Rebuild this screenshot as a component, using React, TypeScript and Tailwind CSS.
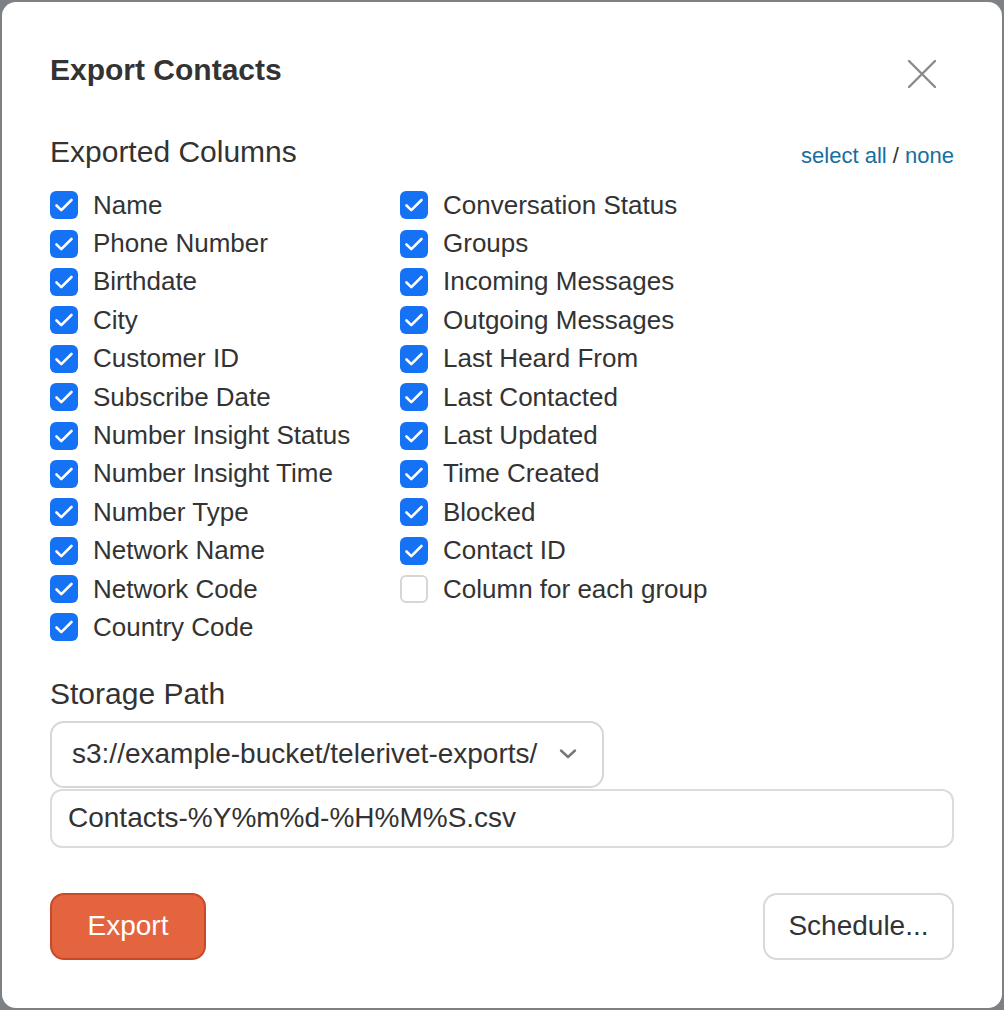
import { useState } from 'react'

const LEFT = [
  'Name',
  'Phone Number',
  'Birthdate',
  'City',
  'Customer ID',
  'Subscribe Date',
  'Number Insight Status',
  'Number Insight Time',
  'Number Type',
  'Network Name',
  'Network Code',
  'Country Code',
]

const RIGHT = [
  'Conversation Status',
  'Groups',
  'Incoming Messages',
  'Outgoing Messages',
  'Last Heard From',
  'Last Contacted',
  'Last Updated',
  'Time Created',
  'Blocked',
  'Contact ID',
  'Column for each group',
]

function Check({ label, checked, onToggle }: { label: string; checked: boolean; onToggle: () => void }) {
  return (
    <label className="flex items-center h-[38.4px] cursor-pointer" onClick={onToggle}>
      {checked ? (
        <span className="w-[28px] h-[28px] rounded-[6px] bg-[#1672f5] flex items-center justify-center flex-shrink-0">
          <svg width="28" height="28" viewBox="0 0 28 28" fill="none">
            <path d="M6.5 14.5l4.8 4.6L21.5 9" stroke="#fff" strokeWidth="2.6" strokeLinecap="round" strokeLinejoin="round" />
          </svg>
        </span>
      ) : (
        <span className="w-[28px] h-[28px] rounded-[6px] border-2 border-[#d6d6d6] bg-white flex-shrink-0" />
      )}
      <span className="ml-[15px] text-[26px] text-[#333333] whitespace-nowrap">{label}</span>
    </label>
  )
}

export default function App() {
  const [checked, setChecked] = useState<Record<string, boolean>>(() => {
    const init: Record<string, boolean> = {}
    ;[...LEFT, ...RIGHT].forEach((c) => (init[c] = c !== 'Column for each group'))
    return init
  })

  const toggle = (c: string) => setChecked((s) => ({ ...s, [c]: !s[c] }))

  return (
    <div className="w-[1004px] h-[1010px] bg-[#7d8084] p-[2px] font-['Liberation_Sans',Arial,sans-serif]">
      <div className="w-[1000px] h-[1006px] bg-white rounded-[14px] pt-[50px] px-[48px]">
        {/* header */}
        <div className="flex items-center justify-between h-[36px]">
          <h1 className="text-[30px] font-bold text-[#333333] leading-[36px]">Export Contacts</h1>
          <button className="mr-[16px] mt-[8px] text-[#8a8a8a]">
            <svg width="32" height="32" viewBox="0 0 32 32" fill="none">
              <path d="M3 3l26 26M29 3L3 29" stroke="currentColor" strokeWidth="2.4" strokeLinecap="round" />
            </svg>
          </button>
        </div>

        {/* columns */}
        <div className="flex items-end justify-between mt-[46px] h-[36px]">
          <h2 className="text-[30px] text-[#333333] leading-[36px]">Exported Columns</h2>
          <div className="text-[22px] leading-[26px] mb-[1px] text-[#333333]">
            <a className="text-[#156fa0]">select all</a> / <a className="text-[#156fa0]">none</a>
          </div>
        </div>

        <div className="grid grid-cols-[350px_1fr] mt-[16px]">
          <div className="flex flex-col">
            {LEFT.map((c) => (
              <Check key={c} label={c} checked={checked[c]} onToggle={() => toggle(c)} />
            ))}
          </div>
          <div className="flex flex-col">
            {RIGHT.map((c) => (
              <Check key={c} label={c} checked={checked[c]} onToggle={() => toggle(c)} />
            ))}
          </div>
        </div>

        {/* storage */}
        <h2 className="text-[30px] text-[#333333] leading-[36px] mt-[29px]">Storage Path</h2>
        <div className="mt-[9px] w-[554px] h-[67px] border-2 border-[#d7d7d7] rounded-[14px] flex items-center justify-between pl-[20px] pr-[24px]">
          <span className="text-[28px] text-[#333333] whitespace-nowrap">s3://example-bucket/telerivet-exports/</span>
          <svg width="20" height="12" viewBox="0 0 20 12" fill="none" className="text-[#777777]">
            <path d="M3 2.5l7 6.5 7-6.5" stroke="currentColor" strokeWidth="2.4" strokeLinecap="round" strokeLinejoin="round" />
          </svg>
        </div>
        <div className="mt-[1px] w-[904px] h-[59px] border-2 border-[#dcdcdc] rounded-[12px] flex items-center pl-[16px]">
          <span className="text-[28px] text-[#333333]">Contacts-%Y%m%d-%H%M%S.csv</span>
        </div>

        {/* actions */}
        <div className="flex justify-between mt-[45px] w-[904px]">
          <button className="h-[67px] w-[156px] rounded-[14px] bg-[#e46440] border-2 border-[#c8492a] text-white text-[28px]">
            Export
          </button>
          <button className="h-[67px] w-[191px] rounded-[14px] bg-white border-2 border-[#d9d9d9] text-[#333333] text-[28px]">
            Schedule...
          </button>
        </div>
      </div>
    </div>
  )
}
